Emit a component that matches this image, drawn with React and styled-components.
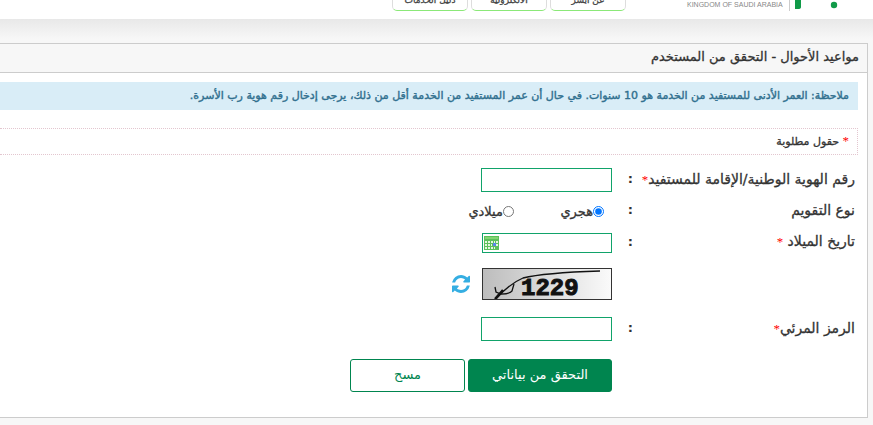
import React, { useState } from 'react'
import styled, { createGlobalStyle } from 'styled-components'

const GlobalStyle = createGlobalStyle`
  * {
    box-sizing: border-box;
  }
  body {
    margin: 0;
    background: #f7f7f7;
    color: #333;
    font-family: 'DejaVu Sans', sans-serif;
    font-size: 13px;
  }
  input, button {
    font-family: inherit;
  }
`

const Header = styled.header`
  height: 19px;
  padding-right: 35px;
  display: flex;
  align-items: flex-start;
  background: #fff;
  overflow: hidden;
`

const Logo = styled.svg`
  display: block;
  margin-left: 8px;
`

const Country = styled.span`
  width: 94px;
  direction: ltr;
  font-family: 'Liberation Sans', Arial, sans-serif;
  font-size: 7px;
  line-height: 9px;
  color: #888;
  white-space: nowrap;
`

const Nav = styled.nav`
  height: 11px;
  margin-right: 61px;
  display: flex;
  align-items: flex-end;
  gap: 3px;
`

const NavLink = styled.a`
  width: 76px;
  height: 32px;
  flex: none;
  padding-top: 14px;
  border: 1px solid #ddd;
  border-bottom-color: #8be878;
  border-radius: 5px;
  color: #444;
  font-size: 9px;
  line-height: 12px;
  text-align: center;
  text-decoration: none;
  white-space: nowrap;
  -webkit-text-stroke: 0.3px;
`

const Main = styled.main`
  padding: 24px 5px 7px 0;
  background: linear-gradient(#e8e8e8, #f7f7f7 20px);
`

const Panel = styled.section`
  background: #fff;
  border: 1px solid #ccc;
  border-left: 0;
`

const Title = styled.h1`
  margin: 0;
  padding: 0 8px 2px;
  background: #f7f7f7;
  border-bottom: 1px solid #ccc;
  font-size: 13px;
  font-weight: normal;
  line-height: 26px;
  -webkit-text-stroke: 0.3px;
`

const Note = styled.p`
  margin: 9px 9px 18px 0;
  padding: 0 9px;
  background: #d9edf7;
  color: #31708f;
  font-size: 11px;
  line-height: 28px;
  white-space: nowrap;
  -webkit-text-stroke: 0.4px;
`

const Required = styled.p`
  margin: 0 9px 13px 0;
  padding: 0 8px;
  border: 1px dotted #e3c6cf;
  border-left: 0;
  font-size: 11px;
  line-height: 24px;
  -webkit-text-stroke: 0.3px;
`

const Star = styled.span`
  color: #f00;
  font-family: 'Liberation Serif', serif;
  font-size: 13px;
  -webkit-text-stroke: 0;
`

const Form = styled.form`
  padding: 0 12px 25px 0;
`

const Row = styled.div`
  display: grid;
  grid-template-columns: 222px 21px 1fr;
  align-items: center;
  min-height: ${props => props.$height}px;
  margin-bottom: ${props => props.$gap}px;
`

const Label = styled.label`
  padding-bottom: 2px;
  font-size: 14px;
  line-height: 18px;
  white-space: nowrap;
  -webkit-text-stroke: 0.3px;
`

const Colon = styled.span`
  font-weight: bold;
  line-height: 18px;
  padding-bottom: 2px;
`

const Field = styled.div`
  grid-column: 3;
  display: flex;
  align-items: center;
`

const TextInput = styled.input`
  width: 131px;
  height: 24px;
  padding: 0 4px;
  border: 1px solid #11a36a;
  background: #fff;
`

const DateBox = styled.div`
  width: 130px;
  height: 20px;
  display: flex;
  align-items: center;
  border: 1px solid #11a36a;
`

const DateInput = styled.input`
  flex: 1;
  min-width: 0;
  height: 16px;
  padding: 0 4px;
  border: 0;
  outline: 0;
`

const IconButton = styled.button`
  display: flex;
  padding: 0;
  margin: 0 ${props => props.$space}px;
  border: 0;
  background: none;
  cursor: pointer;
`

const Option = styled.label`
  width: 90px;
  display: flex;
  align-items: center;
  white-space: nowrap;
  -webkit-text-stroke: 0.3px;
`

const Radio = styled.input`
  width: 11px;
  height: 11px;
  margin: 0 8px 0 0;
`

const Captcha = styled.svg`
  display: block;
  border: 1px solid #333;
`

const Button = styled.button`
  width: ${props => (props.$primary ? 144 : 115)}px;
  height: 33px;
  padding: 0 6px 2px;
  border: 1px solid #00854f;
  border-radius: 3px;
  background: ${props => (props.$primary ? '#00854f' : '#fff')};
  color: ${props => (props.$primary ? '#fff' : '#00854f')};
  font-size: 13px;
  white-space: nowrap;
  cursor: pointer;
`

const Buttons = styled(Field)`
  gap: 3px;
`

function CalendarIcon () {
  return (
    <svg width='15' height='14' viewBox='0 0 15 14'>
      <rect width='15' height='14' fill='#5cc05a' />
      <rect x='1' y='1' width='13' height='2' fill='#83d573' />
      <path d='M1 5h2v2H1zM4 5h2v2H4zM7 5h2v2H7zM10 5h1v2h-1zM12 5h2v2h-2zM1 8h2v2H1zM4 8h2v2H4zM7 8h1v2H7zM12 8h2v2h-2zM1 11h2v2H1zM4 11h2v2H4zM7 11h2v2H7zM10 11h1v2h-1z' fill='#e4f6df' />
      <rect x='9' y='7' width='3' height='3' fill='#5b86e8' />
    </svg>
  )
}

function RefreshIcon () {
  return (
    <svg width='18' height='18' viewBox='0 0 1536 1536' fill='#35aee2'>
      <path d='M1511 928q0 5-1 7-64 268-268 434.500T764 1536q-146 0-282.500-55T238 1324l-129 129q-19 19-45 19t-45-19-19-45V960q0-26 19-45t45-19h448q26 0 45 19t19 45-19 45l-137 137q71 66 161 102t187 36q134 0 250-65t186-179q11-17 53-117 8-23 30-23h192q13 0 22.500 9.500t9.500 22.500zm25-800v448q0 26-19 45t-45 19h-448q-26 0-45-19t-19-45 19-45l138-138Q969 256 768 256q-134 0-250 65T332 500q-11 17-53 117-8 23-30 23H50q-13 0-22.500-9.500T18 608v-7q65-268 270-434.500T768 0q146 0 284 55.500T1297 212l130-129q19-19 45-19t45 19 19 45z' />
    </svg>
  )
}

function CaptchaImage () {
  return (
    <Captcha width='130' height='32' viewBox='0 0 128 30' role='img' aria-label='1229'>
      <defs>
        <linearGradient id='shade'>
          <stop offset='0' stopColor='#bdbdbd' />
          <stop offset='1' stopColor='#fafafa' />
        </linearGradient>
      </defs>
      <rect width='128' height='30' fill='url(#shade)' />
      <text x='38' y='26' fontFamily='Liberation Mono' fontWeight='bold' fontSize='24' fill='#111' stroke='#111' direction='ltr'>1229</text>
      <path d='M13 30C20 22 28 14 40 9C56 5 86 3 117 2' fill='none' stroke='#111' strokeWidth='1.3' />
      <path d='M12 30L20 21' stroke='#111' strokeWidth='2.5' />
      <path d='M12 18l1 5 5 2c6 0 9-1 11-3l2-7' fill='none' stroke='#111' strokeWidth='1.3' />
    </Captcha>
  )
}

function App () {
  const [calendar, setCalendar] = useState('hijri')

  return (
    <div dir='rtl'>
      <GlobalStyle />
      <Header>
        <Logo width='49' height='12' viewBox='0 0 49 12'>
          <path d='M.5 0v11' stroke='#ccc' />
          <path d='M6 0h6v7q0 2-3 2H6z' fill='#109a48' />
          <circle cx='45' cy='5' r='3.2' fill='#109a48' />
        </Logo>
        <Country>KINGDOM OF SAUDI ARABIA</Country>
        <Nav>
          <NavLink href='#about'>عن أبشر</NavLink>
          <NavLink href='#services'>الالكترونية</NavLink>
          <NavLink href='#guide'>دليل الخدمات</NavLink>
        </Nav>
      </Header>
      <Main>
        <Panel>
          <Title>مواعيد الأحوال - التحقق من المستخدم</Title>
          <Note>ملاحظة: العمر الأدنى للمستفيد من الخدمة هو 10 سنوات. في حال أن عمر المستفيد من الخدمة أقل من ذلك، يرجى إدخال رقم هوية رب الأسرة.</Note>
          <Required><Star>*</Star> حقول مطلوبة</Required>
          <Form onSubmit={e => e.preventDefault()}>
            <Row $height={24} $gap={8}>
              <Label htmlFor='idNumber'>رقم الهوية الوطنية/الإقامة للمستفيد<Star>*</Star></Label>
              <Colon>:</Colon>
              <Field><TextInput id='idNumber' /></Field>
            </Row>
            <Row $height={22} $gap={10} role='radiogroup' aria-labelledby='calendarType'>
              <Label as='span' id='calendarType'>نوع التقويم</Label>
              <Colon>:</Colon>
              <Field>
                <Option>
                  <Radio type='radio' name='calendar' checked={calendar === 'hijri'} onChange={() => setCalendar('hijri')} />
                  هجري
                </Option>
                <Option>
                  <Radio type='radio' name='calendar' checked={calendar === 'gregorian'} onChange={() => setCalendar('gregorian')} />
                  ميلادي
                </Option>
              </Field>
            </Row>
            <Row $height={20} $gap={15}>
              <Label htmlFor='birthDate'>تاريخ الميلاد <Star>*</Star></Label>
              <Colon>:</Colon>
              <Field>
                <DateBox>
                  <DateInput id='birthDate' />
                  <IconButton type='button' $space={1} aria-label='التقويم'><CalendarIcon /></IconButton>
                </DateBox>
              </Field>
            </Row>
            <Row $height={32} $gap={17}>
              <Field>
                <CaptchaImage />
                <IconButton type='button' $space={12} aria-label='تحديث'><RefreshIcon /></IconButton>
              </Field>
            </Row>
            <Row $height={24} $gap={18}>
              <Label htmlFor='code'>الرمز المرئي<Star>*</Star></Label>
              <Colon>:</Colon>
              <Field><TextInput id='code' /></Field>
            </Row>
            <Row $height={33} $gap={0}>
              <Buttons>
                <Button $primary type='submit'>التحقق من بياناتي</Button>
                <Button type='reset'>مسح</Button>
              </Buttons>
            </Row>
          </Form>
        </Panel>
      </Main>
    </div>
  )
}

export default App
